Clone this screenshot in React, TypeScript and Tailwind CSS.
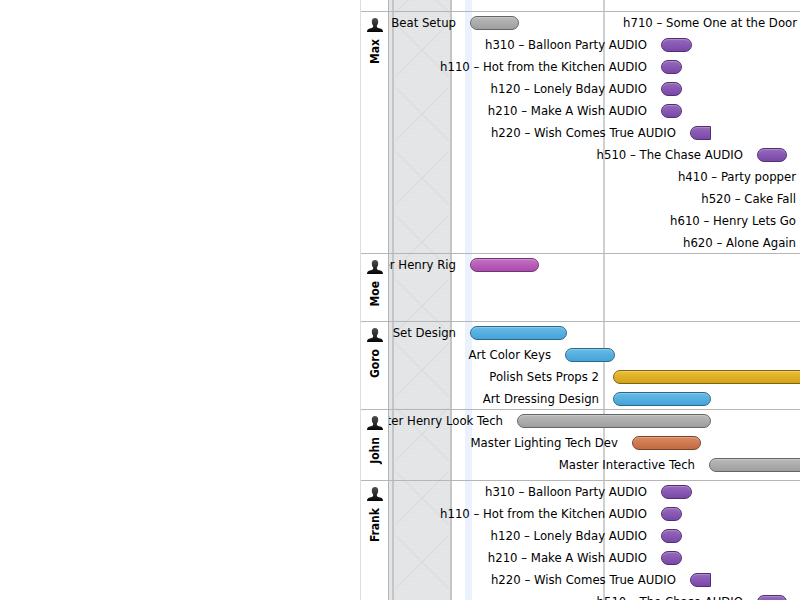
const G = "from-[#b9b9b9] to-[#9f9f9f] border-[#656565]";
const V = "from-[#9568bc] to-[#7a48a8] border-[#4f2f70]";
const P = "from-[#c66fc5] to-[#a94cab] border-[#73337a]";
const B = "from-[#66bbe6] to-[#46a3d8] border-[#2c6887]";
const Y = "from-[#ecbf34] to-[#d3a318] border-[#7d6210]";
const O = "from-[#db8861] to-[#c26a42] border-[#7d4329]";

type Task = {
  label: string;
  start: number;
  width: number;
  tone?: string;
  cut?: boolean;
  next?: { label: string; end: number };
};

type Person = { name: string; height: string; tasks: Task[] };

const audio: Task[] = [
  { label: "h310 – Balloon Party AUDIO", start: 272, width: 31, tone: V },
  { label: "h110 – Hot from the Kitchen AUDIO", start: 272, width: 21, tone: V },
  { label: "h120 – Lonely Bday AUDIO", start: 272, width: 21, tone: V },
  { label: "h210 – Make A Wish AUDIO", start: 272, width: 21, tone: V },
  { label: "h220 – Wish Comes True AUDIO", start: 301, width: 21, tone: V, cut: true },
  { label: "h510 – The Chase AUDIO", start: 368, width: 30, tone: V },
];

const people: Person[] = [
  {
    name: "Max",
    height: "h-[242px]",
    tasks: [
      { label: "Story Beat Setup", start: 81, width: 49, tone: G, next: { label: "h710 – Some One at the Door", end: 408 } },
      ...audio,
      { label: "h410 – Party popper", start: 421, width: 30, tone: V },
      { label: "h520 – Cake Fall", start: 421, width: 30, tone: V },
      { label: "h610 – Henry Lets Go", start: 421, width: 30, tone: V },
      { label: "h620 – Alone Again", start: 421, width: 30, tone: V },
    ],
  },
  { name: "Moe", height: "h-[68px]", tasks: [{ label: "Master Henry Rig", start: 81, width: 69, tone: P }] },
  {
    name: "Goro",
    height: "h-[88px]",
    tasks: [
      { label: "Art Set Design", start: 81, width: 97, tone: B },
      { label: "Art Color Keys", start: 176, width: 50, tone: B },
      { label: "Polish Sets Props 2", start: 224, width: 400, tone: Y },
      { label: "Art Dressing Design", start: 224, width: 98, tone: B },
    ],
  },
  {
    name: "John",
    height: "h-[71px]",
    tasks: [
      { label: "Master Henry Look Tech", start: 128, width: 194, tone: G },
      { label: "Master Lighting Tech Dev", start: 243, width: 69, tone: O },
      { label: "Master Interactive Tech", start: 320, width: 300, tone: G },
    ],
  },
  { name: "Frank", height: "h-[242px]", tasks: audio },
];

function PersonIcon() {
  return (
    <svg viewBox="0 0 16 14" className="h-3.5 w-4 shrink-0" aria-hidden="true">
      <defs>
        <linearGradient id="bust" x1="0" y1="0" x2="0" y2="1">
          <stop offset="0" stopColor="#505050" />
          <stop offset="0.6" stopColor="#222" />
          <stop offset="1" stopColor="#050505" />
        </linearGradient>
      </defs>
      <path
        fill="url(#bust)"
        d="M8 0C10.200 0 11.300 1.500 11.200 3.800C11.100 5.600 10.600 6.700 9.900 7.500V8.900C10.400 9.700 11.800 10 13.300 10.400C15.300 11 16 11.700 16 14H0C0 11.700 0.700 11 2.700 10.400C4.200 10 5.600 9.700 6.100 8.900V7.500C5.400 6.700 4.900 5.600 4.800 3.800C4.700 1.500 5.800 0 8 0Z"
      />
    </svg>
  );
}

function TaskRow({ task }: { task: Task }) {
  const used = task.start + task.width;
  return (
    <li className="flex h-[22px] items-center">
      <span className="flex shrink-0 justify-end overflow-hidden pr-3.5 whitespace-nowrap" style={{ width: task.start }}>
        {task.label}
      </span>
      <span
        className={`h-3.5 shrink-0 border bg-linear-to-b shadow-[inset_0_1px_1px_rgba(255,255,255,0.25)] ${task.cut ? "rounded-l-full" : "rounded-full"} ${task.tone}`}
        style={{ width: task.width }}
      />
      {task.next && (
        <span className="shrink-0 text-right whitespace-nowrap" style={{ width: task.next.end - used }}>
          {task.next.label}
        </span>
      )}
    </li>
  );
}

function Backdrop() {
  return (
    <div className="absolute inset-y-0 right-0 left-7 flex" aria-hidden="true">
      <div className="w-1 border-l border-l-[#b2b3b4] bg-[#e4e5e6]" />
      <svg className="h-full w-[60px] border-x-2 border-x-[#c4c5c6] bg-[#e6e7e9]">
        <defs>
          <pattern id="weekend" width="60" height="64" y="18" patternUnits="userSpaceOnUse">
            <path d="M1 5L55 59M55 5L1 59" stroke="#dcdddf" strokeWidth="1.500" />
          </pattern>
          <pattern id="lines" width="4" height="2" patternUnits="userSpaceOnUse">
            <path d="M0 0.500H4" stroke="#e2e3e5" strokeWidth="1" />
          </pattern>
        </defs>
        <rect width="100%" height="100%" fill="url(#lines)" />
        <rect width="100%" height="100%" fill="url(#weekend)" />
      </svg>
      <div className="ml-[13px] w-[7px] bg-[#ebf2fe]" />
      <div className="ml-[131px] w-0.5 bg-[#cfd0d2]" />
    </div>
  );
}

export default function App() {
  return (
    <div className="flex h-screen overflow-hidden bg-white font-['DejaVu_Sans_Condensed','Noto_Sans',sans-serif] text-[13px] text-black">
      <aside className="w-[360px] shrink-0" />
      <main className="relative h-full min-w-0 flex-1 overflow-hidden">
        <Backdrop />
        <div className="relative border-l border-l-[#dedede] pt-3">
          {people.map((person) => (
            <section key={person.name} className={`flex shadow-[0_-1px_0_#b5b6b7] ${person.height}`}>
              <header className="flex w-7 shrink-0 flex-col items-center gap-[7px] pt-1.5">
                <PersonIcon />
                <h2 className="rotate-180 text-[12px] leading-4 font-bold [writing-mode:vertical-rl]">{person.name}</h2>
              </header>
              <ul className="min-w-0 flex-1 overflow-hidden">
                {person.tasks.map((task) => (
                  <TaskRow key={task.label} task={task} />
                ))}
              </ul>
            </section>
          ))}
        </div>
      </main>
    </div>
  );
}
